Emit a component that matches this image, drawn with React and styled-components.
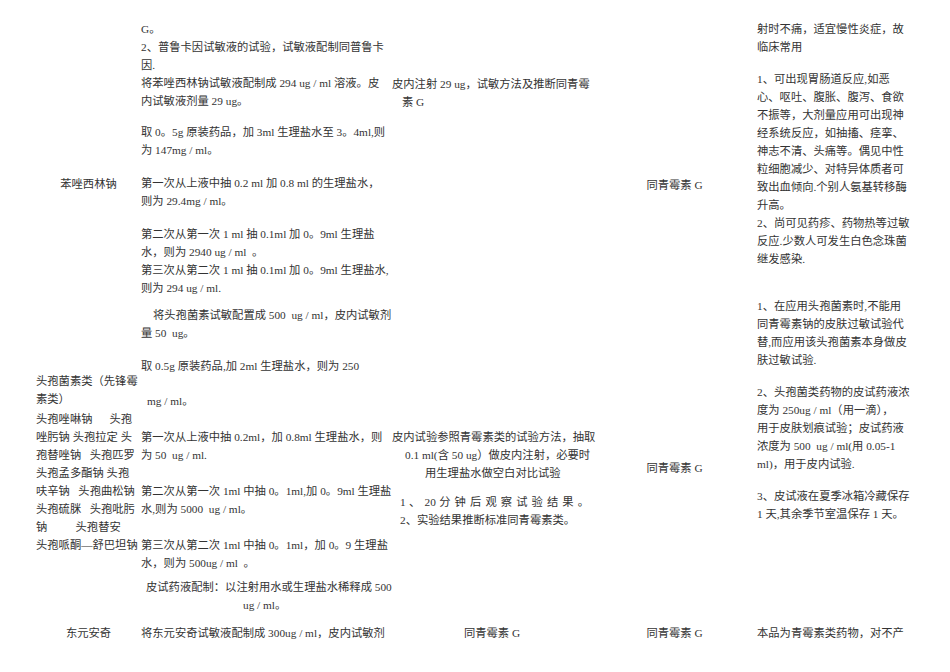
import React from 'react';
import styled, { createGlobalStyle } from 'styled-components';

const GlobalStyle = createGlobalStyle`
  html, body {
    margin: 0;
    padding: 0;
    background: #fff;
  }
  body {
    font-family: 'Liberation Serif', 'Noto Sans CJK SC', serif;
    font-size: 11.3px;
    color: #333;
  }
`;

const Sheet = styled.div`
  width: 950px;
  height: 672px;
  overflow: hidden;
  padding-left: 36px;
  box-sizing: border-box;
`;

const Row = styled.div`
  display: grid;
  grid-template-columns: 105px 251px 200px 165px 160px;
  align-items: start;
`;

const Cell = styled.div`
  display: flex;
  flex-direction: column;
  padding-top: ${p => p.$top || 0}px;
  text-align: ${p => (p.$center ? 'center' : 'left')};
`;

const Line = styled.div`
  height: 18px;
  line-height: 18px;
  white-space: ${p => (p.$justify ? 'normal' : 'pre')};
  margin-top: ${p => p.$gap || 0}px;
  padding-left: ${p => p.$indent || 0}px;
  padding-right: ${p => (p.$justify ? 3 : 0)}px;
  text-align: ${p => (p.$justify ? 'justify' : 'inherit')};
  text-align-last: ${p => (p.$justify ? 'justify' : 'auto')};
`;

// [text, gapBefore, indent, justify]
const rows = [
  [
    { top: 175, center: true, lines: [['苯唑西林钠']] },
    {
      top: 20,
      lines: [
        ['G。'],
        ['2、普鲁卡因试敏液的试验，试敏液配制同普鲁卡'],
        ['因.'],
        ['将苯唑西林钠试敏液配制成 294 ug / ml 溶液。皮'],
        ['内试敏液剂量 29 ug。'],
        ['取 0。5g 原装药品，加 3ml 生理盐水至 3。4ml,则', 13],
        ['为 147mg / ml。'],
        ['第一次从上液中抽 0.2 ml 加 0.8 ml 的生理盐水，', 15],
        ['则为 29.4mg / ml。'],
        ['第二次从第一次 1 ml 抽 0.1ml 加 0。9ml 生理盐', 15],
        ['水，则为 2940 ug / ml  。'],
        ['第三次从第二次 1 ml 抽 0.1ml 加 0。9ml 生理盐水,'],
        ['则为 294 ug / ml.'],
      ],
    },
    {
      top: 75,
      lines: [['皮内注射 29 ug，试敏方法及推断同青霉'], ['素 G', 0, 10]],
    },
    { top: 176, center: true, lines: [['同青霉素 G']] },
    {
      top: 20,
      lines: [
        ['射时不痛，适宜慢性炎症，故'],
        ['临床常用'],
        ['1、可出现胃肠道反应,如恶', 14],
        ['心、呕吐、腹胀、腹泻、食欲'],
        ['不振等，大剂量应用可出现神'],
        ['经系统反应，如抽搐、痉挛、'],
        ['神志不清、头痛等。偶见中性'],
        ['粒细胞减少、对特异体质者可'],
        ['致出血倾向.个别人氨基转移酶'],
        ['升高。'],
        ['2、尚可见药疹、药物热等过敏'],
        ['反应.少数人可发生白色念珠菌'],
        ['继发感染.'],
      ],
    },
  ],
  [
    {
      top: 75,
      lines: [
        ['头孢菌素类（先锋霉'],
        ['素类）'],
        ['头孢唑啉钠　  头孢', 2],
        ['唑肟钠 头孢拉定 头'],
        ['孢替唑钠   头孢匹罗'],
        ['头孢孟多酯钠 头孢'],
        ['呋辛钠   头孢曲松钠'],
        ['头孢硫脒   头孢吡肟'],
        ['钠　　  头孢替安'],
        ['头孢哌酮—舒巴坦钠'],
      ],
    },
    {
      top: 9,
      lines: [
        ['将头孢菌素试敏配置成 500  ug / ml，皮内试敏剂', 0, 12],
        ['量 50  ug。'],
        ['取 0.5g 原装药品,加 2ml 生理盐水，则为 250', 15],
        ['mg / ml。', 17, 6],
        ['第一次从上液中抽 0.2ml，加 0.8ml 生理盐水，则', 18],
        ['为 50  ug / ml.'],
        ['第二次从第一次 1ml 中抽 0。1ml,加 0。9ml 生理盐', 18],
        ['水,则为 5000  ug / ml。'],
        ['第三次从第二次 1ml 中抽 0。1ml，加 0。9 生理盐', 18],
        ['水，则为 500ug / ml  。'],
        ['皮试药液配制：以注射用水或生理盐水稀释成 500', 6, 5],
        ['ug / ml。', 0, 102],
      ],
    },
    {
      top: 131,
      lines: [
        ['皮内试验参照青霉素类的试验方法，抽取'],
        ['0.1 ml(含 50 ug）做皮内注射，必要时', 0, 13],
        ['用生理盐水做空白对比试验', 0, 33],
        ['1 、 20 分 钟 后 观 察 试 验 结 果 。', 11, 8, true],
        ['2、实验结果推断标准同青霉素类。', 0, 8],
      ],
    },
    { top: 162, center: true, lines: [['同青霉素 G']] },
    {
      top: 0,
      lines: [
        ['1、在应用头孢菌素时,不能用'],
        ['同青霉素钠的皮肤过敏试验代'],
        ['替,而应用该头孢菌素本身做皮'],
        ['肤过敏试验.'],
        ['2、头孢菌类药物的皮试药液浓', 14],
        ['度为 250ug / ml（用一滴），'],
        ['用于皮肤划痕试验；皮试药液'],
        ['浓度为 500  ug / ml(用 0.05-1'],
        ['ml)，用于皮内试验.'],
        ['3、皮试液在夏季冰箱冷藏保存', 14],
        ['1 天,其余季节室温保存 1 天。'],
      ],
    },
  ],
  [
    { top: 10, center: true, lines: [['东元安奇']] },
    { top: 10, lines: [['将东元安奇试敏液配制成 300ug / ml，皮内试敏剂']] },
    { top: 10, center: true, lines: [['同青霉素 G']] },
    { top: 10, center: true, lines: [['同青霉素 G']] },
    { top: 10, lines: [['本品为青霉素类药物，对不产']] },
  ],
];

export default function App() {
  return (
    <>
      <GlobalStyle />
      <Sheet>
        {rows.map((cells, r) => (
          <Row key={r}>
            {cells.map((cell, c) => (
              <Cell key={c} $top={cell.top} $center={cell.center}>
                {cell.lines.map(([text, gap, indent, justify], i) => (
                  <Line key={i} $gap={gap} $indent={indent} $justify={justify}>
                    {text}
                  </Line>
                ))}
              </Cell>
            ))}
          </Row>
        ))}
      </Sheet>
    </>
  );
}
